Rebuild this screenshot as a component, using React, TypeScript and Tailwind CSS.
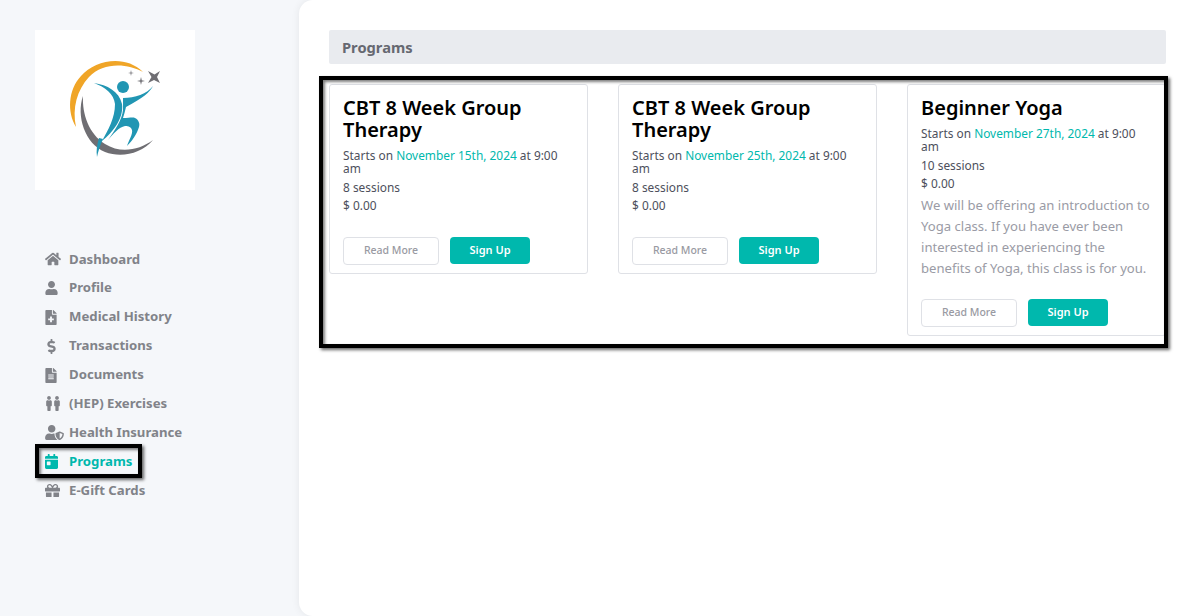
import { FaCalendarDay, FaDollarSign, FaFileAlt, FaFileMedical, FaGift, FaHome, FaMale, FaUser, FaUserShield } from 'react-icons/fa'
import type { ReactNode } from 'react'

const fontStack = { fontFamily: '"Noto Sans", sans-serif' }

const menu: { label: string; icon: ReactNode; active?: boolean }[] = [
  { label: 'Dashboard', icon: <FaHome className="w-4 h-4" /> },
  { label: 'Profile', icon: <FaUser className="w-[13px] h-[14px]" /> },
  { label: 'Medical History', icon: <FaFileMedical className="w-[12px] h-[15px]" /> },
  { label: 'Transactions', icon: <FaDollarSign className="w-[13px] h-[15px]" /> },
  { label: 'Documents', icon: <FaFileAlt className="w-[12px] h-[15px]" /> },
  {
    label: '(HEP) Exercises',
    icon: (
      <span className="flex -space-x-[2px] -ml-[1px]">
        <FaMale className="w-[10px] h-[15px]" />
        <FaMale className="w-[10px] h-[15px]" />
      </span>
    ),
  },
  { label: 'Health Insurance', icon: <FaUserShield className="w-[19px] h-[15px]" /> },
  { label: 'Programs', icon: <FaCalendarDay className="w-[13px] h-[15px]" />, active: true },
  { label: 'E-Gift Cards', icon: <FaGift className="w-[15px] h-[15px]" /> },
]

const programs = [
  { title: 'CBT 8 Week Group Therapy', date: 'November 15th, 2024', sessions: '8 sessions' },
  { title: 'CBT 8 Week Group Therapy', date: 'November 25th, 2024', sessions: '8 sessions' },
  {
    title: 'Beginner Yoga',
    date: 'November 27th, 2024',
    sessions: '10 sessions',
    text: 'We will be offering an introduction to Yoga class. If you have ever been interested in experiencing the benefits of Yoga, this class is for you.',
  },
]

function Logo() {
  return (
    <svg viewBox="0 0 160 160" className="w-[160px] h-[160px]">
      {/* orange arc */}
      <path d="M41 97 C32 82 33 60 46 46 C60 30 90 24 108 42 C92 33 68 32 54 47 C42 60 37 78 41 97 Z" fill="#f0a527" />
      {/* grey arc */}
      <path d="M48 66 C47 84 54 104 70 114 C86 124 104 120 118 110 C106 124 86 128 70 122 C50 114 41 86 48 66 Z" fill="#6f6e73" />
      {/* runner */}
      <circle cx="88" cy="57" r="6" fill="#2196b3" />
      <path d="M59 53 C72 55 84 61 87 74 C89 88 78 102 67 111 C73 100 80 88 80 74 C79 64 70 57 59 53 Z" fill="#2196b3" />
      <path d="M68 109 C65 115 63 122 62 127 C61 121 62 114 64 108 Z" fill="#2196b3" />
      <path d="M88 68 C100 68 112 64 118 56 C115 62 108 68 91 77 C90 81 89 85 88 88 C94 88 98 87 100 88 C104 90 105 94 104 97 C102 104 97 111 92 116 C94 110 98 104 97 100 C96 97 94 96 90 96 C84 97 78 104 73 110 C80 100 87 90 88 80 Z" fill="#2196b3" />
      {/* stars */}
      <path d="M113 41 L119.5 44.5 L125 41 L122 47 L125 53 L119 50 L113 53 L116.5 47 Z" fill="#6f6e73" />
      <path d="M106 47 L106.8 50.2 L110 51 L106.8 51.8 L106 55 L105.2 51.8 L102 51 L105.2 50.2 Z" fill="#77767b" />
      <path d="M96 40 L96.6 42.4 L99 43 L96.6 43.6 L96 46 L95.4 43.6 L93 43 L95.4 42.4 Z" fill="#8a898e" />
    </svg>
  )
}

function ProgramCard({ title, date, sessions, text }: { title: string; date: string; sessions: string; text?: string }) {
  return (
    <div className="border border-[#dfe1e6] rounded-[3px] pt-[12px] px-[13px] pb-[8px] bg-white">
      <h2 className="text-[20px] leading-[22px] font-semibold text-black">{title}</h2>
      <p className="mt-[8px] text-[11.9px] leading-[13px] text-[#4d4f5c]">
        Starts on <span className="text-[#00b8ad]">{date}</span> at 9:00 am
      </p>
      <p className="mt-[6px] text-[11.9px] leading-[13px] text-[#4d4f5c]">{sessions}</p>
      <p className="mt-[5px] text-[11.9px] leading-[13px] text-[#4d4f5c]">$ 0.00</p>
      {text ? (
        <p className="mt-[5px] text-[13.1px] leading-[21px] text-[#9a9ba5]">{text}</p>
      ) : (
        <div className="h-[11px]" />
      )}
      <div className={`flex items-start gap-[11px] ${text ? 'mt-[20px]' : 'mt-[14px]'}`}>
        <button className="w-[96px] h-[28px] border border-[#dfe1e6] rounded-[4px] bg-white text-[10.5px] font-medium text-[#999aa2]">
          Read More
        </button>
        <button className="w-[80px] h-[27px] rounded-[4px] bg-[#00b8ad] text-[11px] font-semibold text-white">
          Sign Up
        </button>
      </div>
    </div>
  )
}

export default function App() {
  return (
    <div className="relative flex h-[616px] w-[1196px] overflow-hidden bg-[#f5f7fa]" style={fontStack}>
      <aside className="w-[299px] shrink-0 pt-[30px] pl-[35px]">
        <div className="w-[160px] h-[160px] bg-white">
          <Logo />
        </div>
        <nav className="mt-[55px] flex flex-col pl-[10px]">
          {menu.map((item) => (
            <div
              key={item.label}
              className={`flex items-center h-[28.9px] text-[13.2px] font-bold ${item.active ? 'text-[#00b8ad]' : 'text-[#818389]'}`}
            >
              <span className="w-[24px] flex justify-start">{item.icon}</span>
              <span>{item.label}</span>
            </div>
          ))}
        </nav>
      </aside>

      <main className="flex-1 bg-white rounded-l-[14px] shadow-[0_0_8px_rgba(0,0,0,0.07)] pt-[30px] pl-[30px] pr-[30px]">
        <div className="h-[34px] bg-[#e9ebef] rounded-[2px] pl-[13px] flex items-center text-[14.7px] font-bold text-[#666871]">
          Programs
        </div>
        <div className="mt-[20px] grid grid-cols-3 gap-[30px] items-start">
          {programs.map((p) => (
            <ProgramCard key={p.date} {...p} />
          ))}
        </div>
      </main>

      {/* black annotation boxes drawn over the screenshot */}
      <div className="absolute left-[319px] top-[76px] w-[849px] h-[272px] border-[4px] border-black shadow-[2px_2px_3px_rgba(0,0,0,0.6),inset_2px_2px_3px_rgba(0,0,0,0.5)] pointer-events-none" />
      <div className="absolute left-[35px] top-[444px] w-[107px] h-[34px] border-[4px] border-black shadow-[2px_2px_3px_rgba(0,0,0,0.6),inset_2px_2px_3px_rgba(0,0,0,0.5)] pointer-events-none" />
    </div>
  )
}
